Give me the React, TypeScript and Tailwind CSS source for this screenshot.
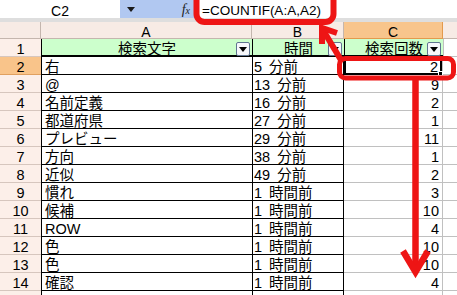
import React from "react";

const rows: [string, string, string, string][] = [
  ["2", "右", "5 分前", "2"],
  ["3", "@", "13 分前", "9"],
  ["4", "名前定義", "16 分前", "2"],
  ["5", "都道府県", "27 分前", "1"],
  ["6", "プレビュー", "29 分前", "11"],
  ["7", "方向", "38 分前", "1"],
  ["8", "近似", "49 分前", "2"],
  ["9", "慣れ", "1 時間前", "3"],
  ["10", "候補", "1 時間前", "10"],
  ["11", "ROW", "1 時間前", "4"],
  ["12", "色", "1 時間前", "10"],
  ["13", "色", "1 時間前", "10"],
  ["14", "確認", "1 時間前", "4"],
  ["", "", "", ""],
];

function FilterButton() {
  return (
    <div className="absolute right-[2px] top-[3px] flex h-[14px] w-[14px] items-center justify-center rounded-[2px] border border-[#5f7590] bg-[#f6f7fb]">
      <svg width="8" height="5" viewBox="0 0 8 5">
        <path d="M0 0 L8 0 L4 5 Z" fill="#000" />
      </svg>
    </div>
  );
}

export default function App() {
  return (
    <div className="relative h-[295px] w-[457px] overflow-hidden bg-white font-['Liberation_Sans','Noto_Sans_CJK_JP',sans-serif] text-black">
      {/* formula bar */}
      <div className="flex h-[18px]">
        <div className="w-[120px] shrink-0 bg-white pt-[3px] text-center text-[14px] leading-[16px]">C2</div>
        <div className="relative flex w-[77px] shrink-0 items-center bg-[#b1c8f1]">
          <svg className="ml-[7px]" width="8" height="5" viewBox="0 0 8 5">
            <path d="M0 0 L8 0 L4 5 Z" fill="#1a1a1a" />
          </svg>
          <span className="ml-auto mr-[7px] pt-[2px] font-['Liberation_Serif',serif] text-[14px] italic leading-none text-[#222]">
            f<span className="text-[10px]">x</span>
          </span>
        </div>
        <div className="flex-1 bg-white pl-[5px] pt-[3px] text-[13.5px] leading-[16px]">=COUNTIF(A:A,A2)</div>
      </div>
      <div className="h-[4px] bg-[#dedede]" />

      {/* column headers */}
      <div className="flex h-[17px] text-[14px] leading-[16px]">
        <div className="w-[41px] shrink-0 border-b border-r border-[#c4b6ae] bg-[#f7ebe5]" />
        <div className="w-[211px] shrink-0 border-b border-r border-[#c4b6ae] bg-[#f7ebe5] pt-[2px] text-center">A</div>
        <div className="w-[92px] shrink-0 border-b border-r border-[#c4b6ae] bg-[#f7ebe5] pt-[2px] text-center">B</div>
        <div className="w-[99px] shrink-0 border-b border-r border-[#e39a4d] bg-[#f8c58c] pt-[2px] text-center">C</div>
        <div className="flex-1 border-b border-[#c4b6ae] bg-[#f7ebe5]" />
      </div>

      {/* header row 1 */}
      <div className="flex h-[18px] text-[14.5px] leading-[15px]">
        <div className="w-[41px] shrink-0 border-b border-[#d6c6be] bg-[#fcefe9] pt-[3px] text-center">1</div>
        <div className="relative w-[211px] shrink-0 border-b-2 border-l border-black bg-[#ccffcc] pt-[3px] text-center">
          検索文字
          <FilterButton />
        </div>
        <div className="relative w-[92px] shrink-0 border-b-2 border-l border-black bg-[#ccffcc] pt-[3px] text-center">
          時間
          <FilterButton />
        </div>
        <div className="relative w-[99px] shrink-0 border-b-2 border-l border-black bg-[#ccffcc] pt-[3px] text-center">
          検索回数
          <FilterButton />
        </div>
        <div className="flex-1 border-b border-l border-[#c0c0c0] bg-white" />
      </div>

      {/* data rows */}
      {rows.map(([n, a, b, c], i) => {
        const sel = i === 0;
        return (
          <div key={i} className="flex h-[18px] text-[14.5px] leading-[15px]">
            <div
              className={
                sel
                  ? "w-[41px] shrink-0 border-b border-[#e0a060] bg-[#f9c48a] pt-[3px] text-center"
                  : "w-[41px] shrink-0 border-b border-[#d6c6be] bg-[#fcefe9] pt-[3px] text-center"
              }
            >
              {n}
            </div>
            <div className="w-[211px] shrink-0 border-b border-l border-black pl-[3px] pt-[3px] whitespace-nowrap">{a}</div>
            <div className="w-[92px] shrink-0 border-b border-l border-r border-black pl-[1px] pt-[3px] whitespace-nowrap [word-spacing:3px]">{b}</div>
            {sel ? (
              <div className="relative w-[98px] shrink-0 border-b border-[#c0c0c0]">
                <div className="absolute inset-x-0 -top-[1px] h-[19px] border-2 border-black bg-white pr-[2px] pt-[2px] text-right">
                  {c}
                  <div className="absolute -bottom-[3px] -right-[3px] h-[5px] w-[5px] border border-white bg-black" />
                </div>
              </div>
            ) : (
              <div className="w-[98px] shrink-0 border-b border-[#c0c0c0] pr-[3px] pt-[3px] text-right">{c}</div>
            )}
            <div className="flex-1 border-b border-l border-[#c0c0c0]" />
          </div>
        );
      })}

      {/* annotations */}
      <svg className="pointer-events-none absolute left-0 top-0" width="457" height="295" viewBox="0 0 457 295">
        <g fill="none" stroke="#ee1515" strokeLinejoin="round">
          <rect x="196.5" y="-8" width="137" height="30" rx="8" strokeWidth="6" />
          <rect x="339.5" y="58.5" width="114" height="19.5" rx="6" strokeWidth="5" />
          <line x1="323" y1="30" x2="341" y2="60" strokeWidth="6" />
          <polyline points="322,44 322,28 337,33" strokeWidth="6" strokeLinejoin="miter" />
          <line x1="415.5" y1="79" x2="415.5" y2="271" strokeWidth="6.5" />
          <polyline points="403,251 415.5,272 428,251" strokeWidth="6.5" strokeLinejoin="miter" />
        </g>
      </svg>
    </div>
  );
}
